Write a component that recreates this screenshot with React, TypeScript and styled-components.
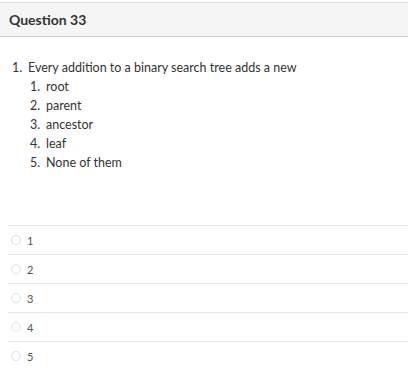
import React from "react";
import styled, { createGlobalStyle } from "styled-components";

const Global = createGlobalStyle`
  html, body { margin: 0; padding: 0; background: #fff; }
  body { font-family: Lato, "Open Sans", sans-serif; color: #2d3b45; }
`;

const Page = styled.div`
  padding-top: 2px;
`;

const Header = styled.div`
  background: #f5f5f5;
  border-top: 1px solid #dcdcdc;
  border-bottom: 1px solid #c7cdd1;
  height: 33px;
  display: flex;
  align-items: center;
  padding-left: 9px;
  font-size: 14px;
  font-weight: 700;
  color: #333;
`;

const Body = styled.div`
  padding: 21px 0 0 0;
`;

const List = styled.div<{ $indent: number }>`
  display: flex;
  flex-direction: column;
  padding-left: ${(p) => p.$indent}px;
  font-size: 12.5px;
  line-height: 19px;
  color: #333;
`;

const Item = styled.div`
  display: flex;
`;

const Num = styled.span`
  width: 16px;
  flex: none;
`;

const Answers = styled.div`
  margin-top: 53px;
  margin-left: 8px;
`;

const Row = styled.label`
  display: flex;
  align-items: center;
  height: 28px;
  border-top: 1px solid #e6e6e6;
  gap: 6px;
  padding-left: 3px;
  font-size: 11px;
  color: #555;
`;

const Radio = styled.span`
  width: 10px;
  height: 10px;
  border-radius: 50%;
  border: 1px solid #e2e2e2;
  box-sizing: border-box;
`;

export default function App() {
  const opts = ["root", "parent", "ancestor", "leaf", "None of them"];
  return (
    <Page>
      <Global />
      <Header>Question 33</Header>
      <Body>
        <List $indent={12}>
          <Item>
            <Num>1.</Num>
            Every addition to a binary search tree adds a new
          </Item>
        </List>
        <List $indent={30}>
          {opts.map((o, i) => (
            <Item key={o}>
              <Num>{i + 1}.</Num>
              {o}
            </Item>
          ))}
        </List>
        <Answers>
          {[1, 2, 3, 4, 5].map((n) => (
            <Row key={n}>
              <Radio />
              {n}
            </Row>
          ))}
        </Answers>
      </Body>
    </Page>
  );
}
